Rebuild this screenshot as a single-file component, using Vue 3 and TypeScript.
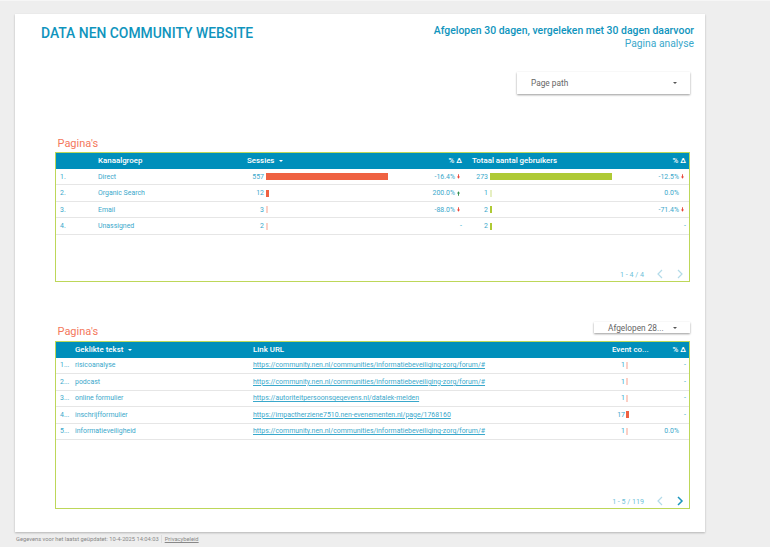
<script setup lang="ts">
interface Delta {
  text: string;
  dir?: 'up' | 'down';
  spacer?: boolean;
}

interface Metric {
  value: number;
  width: number;
  faint?: boolean;
}

interface ChannelRow {
  name: string;
  sessions: Metric;
  sessionsDelta: Delta;
  users: Metric;
  usersDelta: Delta;
}

interface ClickRow {
  label: string;
  url: string;
  events: Metric;
  delta: Delta;
}

const channels: ChannelRow[] = [
  {
    name: 'Direct',
    sessions: { value: 557, width: 122 },
    sessionsDelta: { text: '-16.4%', dir: 'down' },
    users: { value: 273, width: 122 },
    usersDelta: { text: '-12.5%', dir: 'down' },
  },
  {
    name: 'Organic Search',
    sessions: { value: 12, width: 3 },
    sessionsDelta: { text: '200.0%', dir: 'up' },
    users: { value: 1, width: 1.5, faint: true },
    usersDelta: { text: '0.0%', spacer: true },
  },
  {
    name: 'Email',
    sessions: { value: 3, width: 1.5, faint: true },
    sessionsDelta: { text: '-88.0%', dir: 'down' },
    users: { value: 2, width: 1.5 },
    usersDelta: { text: '-71.4%', dir: 'down' },
  },
  {
    name: 'Unassigned',
    sessions: { value: 2, width: 1.5, faint: true },
    sessionsDelta: { text: '-' },
    users: { value: 2, width: 1.5 },
    usersDelta: { text: '-' },
  },
];

const forumUrl = 'https://community.nen.nl/communities/informatiebeveiliging-zorg/forum/#';

const clicks: ClickRow[] = [
  { label: 'risicoanalyse', url: forumUrl, events: { value: 1, width: 1.5, faint: true }, delta: { text: '-' } },
  { label: 'podcast', url: forumUrl, events: { value: 1, width: 1.5, faint: true }, delta: { text: '-' } },
  { label: 'online formulier', url: 'https://autoriteitpersoonsgegevens.nl/datalek-melden', events: { value: 1, width: 1.5, faint: true }, delta: { text: '-' } },
  { label: 'inschrijfformulier', url: 'https://impactherziene7510.nen-evenementen.nl/page/1768160', events: { value: 17, width: 3 }, delta: { text: '-' } },
  { label: 'informatieveiligheid', url: forumUrl, events: { value: 1, width: 1.5, faint: true }, delta: { text: '0.0%', spacer: true } },
];
</script>

<template>
  <div class="page">
    <main class="report">
      <header class="report-head">
        <h1>DATA NEN COMMUNITY WEBSITE</h1>
        <div class="period">
          <div class="period-main">Afgelopen 30 dagen, vergeleken met 30 dagen daarvoor</div>
          <div class="period-sub">Pagina analyse</div>
        </div>
      </header>

      <div class="filter-row">
        <div class="filter filter-large">
          <span>Page path</span>
          <i class="caret" />
        </div>
      </div>

      <section class="block block-channels">
        <div class="block-head">
          <h2>Pagina's</h2>
        </div>
        <div class="table table-channels">
          <div class="row row-head">
            <span />
            <span>Kanaalgroep</span>
            <span>Sessies <i class="caret caret-white" /></span>
            <span class="num">% Δ</span>
            <span>Totaal aantal gebruikers</span>
            <span class="num">% Δ</span>
          </div>
          <div v-for="(row, i) in channels" :key="row.name" class="row">
            <span>{{ i + 1 }}.</span>
            <span>{{ row.name }}</span>
            <span class="metric metric-sessions">
              <b>{{ row.sessions.value }}</b>
              <i class="bar bar-red" :class="{ faint: row.sessions.faint }" :style="{ width: row.sessions.width + 'px' }" />
            </span>
            <span class="num">
              {{ row.sessionsDelta.text }}
              <svg v-if="row.sessionsDelta.dir" class="trend" :class="row.sessionsDelta.dir" viewBox="0 0 4 6"><path :d="row.sessionsDelta.dir === 'up' ? 'M1.4 6h1.2V3H4L2 0 0 3h1.4z' : 'M1.4 0h1.2v3H4L2 6 0 3h1.4z'" /></svg>
            </span>
            <span class="metric metric-users">
              <b>{{ row.users.value }}</b>
              <i class="bar bar-green" :class="{ faint: row.users.faint }" :style="{ width: row.users.width + 'px' }" />
            </span>
            <span class="num">
              {{ row.usersDelta.text }}
              <svg v-if="row.usersDelta.dir" class="trend" :class="row.usersDelta.dir" viewBox="0 0 4 6"><path d="M1.4 0h1.2v3H4L2 6 0 3h1.4z" /></svg>
              <i v-if="row.usersDelta.spacer" class="trend-gap" />
            </span>
          </div>
          <div class="pager">
            <span>1 - 4 / 4</span>
            <svg class="chev" viewBox="0 0 8 10"><path d="M6 1 2 5l4 4" /></svg>
            <svg class="chev" viewBox="0 0 8 10"><path d="m2 1 4 4-4 4" /></svg>
          </div>
        </div>
      </section>

      <section class="block block-clicks">
        <div class="block-head">
          <h2>Pagina's</h2>
          <div class="filter filter-small">
            <span>Afgelopen 28...</span>
            <i class="caret" />
          </div>
        </div>
        <div class="table table-clicks">
          <div class="row row-head">
            <span />
            <span>Geklikte tekst <i class="caret caret-white" /></span>
            <span>Link URL</span>
            <span>Event co...</span>
            <span class="num">% Δ</span>
          </div>
          <div v-for="(row, i) in clicks" :key="row.label" class="row">
            <span>{{ i + 1 }}...</span>
            <span>{{ row.label }}</span>
            <a class="link">{{ row.url }}</a>
            <span class="metric metric-events">
              <b>{{ row.events.value }}</b>
              <i class="bar bar-red" :class="{ faint: row.events.faint }" :style="{ width: row.events.width + 'px' }" />
            </span>
            <span class="num">
              {{ row.delta.text }}
              <i v-if="row.delta.spacer" class="trend-gap" />
            </span>
          </div>
          <div class="pager">
            <span>1 - 5 / 119</span>
            <svg class="chev" viewBox="0 0 8 10"><path d="M6 1 2 5l4 4" /></svg>
            <svg class="chev active" viewBox="0 0 8 10"><path d="m2 1 4 4-4 4" /></svg>
          </div>
        </div>
      </section>
    </main>

    <footer class="page-foot">
      <span>Gegevens voor het laatst geüpdatet: 10-4-2025 14:04:03</span>
      <a>Privacybeleid</a>
    </footer>
  </div>
</template>

<style>
html, body {
  margin: 0;
  background: #eeeeee;
}
</style>

<style scoped>
.page {
  height: 547px;
  box-sizing: border-box;
  padding: 13px 65px 0 15px;
  border-top: 1px solid #f6f6f6;
  overflow: hidden;
  font-family: Roboto, "Liberation Sans", sans-serif;
  color: #3aa8cb;
}

.report {
  height: 518px;
  box-sizing: border-box;
  padding: 0 11px 0 26px;
  background: #fff;
  box-shadow: 0 1px 2px rgba(0, 0, 0, 0.25);
  display: flex;
  flex-direction: column;
}

.report-head {
  display: flex;
  justify-content: space-between;
  align-items: flex-start;
  padding-top: 10px;
  height: 48px;
  box-sizing: border-box;
}

h1 {
  margin: 0;
  font-size: 13.9px;
  line-height: 18px;
  font-weight: 500;
  color: #0f94bd;
}

.period {
  text-align: right;
  font-size: 10.45px;
  line-height: 13px;
  color: #0f94bd;
}

.period-main { font-weight: 500; }
.period-sub { color: #3aa8cb; font-size: 10.3px; }

.filter-row {
  display: flex;
  justify-content: flex-end;
  padding: 10px 4px 0 0;
}

.filter {
  display: flex;
  align-items: center;
  justify-content: space-between;
  box-sizing: border-box;
  background: #fff;
  box-shadow: 0 1px 2px rgba(0, 0, 0, 0.4);
  color: #666;
}

.filter-large {
  width: 173px;
  height: 22px;
  padding: 0 13px 0 14px;
  font-size: 8.3px;
}

.filter-small {
  width: 96px;
  height: 11px;
  padding: 0 13px 0 14px;
  font-size: 8.3px;
}

.caret {
  display: inline-block;
  width: 0;
  height: 0;
  border-left: 2px solid transparent;
  border-right: 2px solid transparent;
  border-top: 2px solid #555;
  vertical-align: middle;
}

.caret-white {
  border-top-color: #fff;
  margin-left: 3px;
}

.block { display: flex; flex-direction: column; }
.block-channels { margin-top: 39px; }
.block-clicks { margin-top: 40px; }

.block-head {
  display: flex;
  justify-content: space-between;
  align-items: flex-start;
  margin: 0 4px 0 14px;
  height: 19px;
}

h2 {
  margin: 0;
  padding-left: 2.5px;
  font-size: 11px;
  line-height: 13px;
  font-weight: 400;
  color: #f4775c;
}

.block-channels h2 { padding-top: 4px; }
.block-clicks h2 { padding-top: 3px; }

.table {
  margin: 0 4px 0 14px;
  box-sizing: border-box;
  border: 1px solid #bdd759;
  display: flex;
  flex-direction: column;
  font-size: 6.95px;
}

.table-channels { height: 130px; }
.table-clicks { height: 168px; }

.row {
  display: grid;
  align-items: center;
  height: 16.5px;
  box-sizing: border-box;
  border-bottom: 1px solid #e6e6e6;
  white-space: nowrap;
}

.table-channels .row { grid-template-columns: 42px 149px 143px 82px 143px 74px; padding-top: 1px; }
.table-clicks .row { grid-template-columns: 19px 178px 359px 42px 35px; }

.row > span:first-child { padding-left: 4px; }

.table .row-head {
  height: 15.5px;
  padding-top: 0;
  border-bottom: 0;
  background: #008fbb;
  color: #fff;
  font-weight: 500;
  font-size: 7.9px;
}

.num {
  display: flex;
  justify-content: flex-end;
  align-items: center;
  gap: 2px;
}

.table-channels .row > .num:nth-child(4) { padding-right: 10px; }
.table-channels .row > .num:nth-child(6),
.table-clicks .row > .num { padding-right: 3px; }

.trend { width: 3px; height: 5px; margin-right: 2px; fill: #e94235; }
.trend.up { fill: #2e8b4a; }
.trend-gap { width: 5px; display: block; }

.metric {
  display: flex;
  align-items: center;
  gap: 2px;
}

.metric b {
  font-weight: 400;
  text-align: right;
}

.metric-sessions b { width: 17px; }
.metric-users b { width: 16px; }
.metric-events { gap: 1px; }
.metric-events b { width: 13px; }

.bar { display: block; height: 7px; }
.bar-red { background: #ef6242; }
.bar-green { background: #afca35; }
.bar-red.faint { background: #fbd0c6; }
.bar-green.faint { background: #e6efc2; }

.link {
  text-decoration: underline;
}

.pager {
  margin-top: auto;
  display: flex;
  justify-content: flex-end;
  align-items: center;
  gap: 12px;
  height: 14px;
  padding-right: 5px;
  font-size: 7.1px;
  color: #6dbfd9;
}

.chev {
  width: 8px;
  height: 10px;
  fill: none;
  stroke: #b3dbe9;
  stroke-width: 1.2;
}

.chev.active { stroke: #1b95bd; stroke-width: 1.5; }

.page-foot {
  display: flex;
  gap: 2px;
  padding: 3px 0 0 1px;
  font-size: 5.75px;
  line-height: 8px;
  color: #888;
}

.page-foot a {
  padding-left: 3px;
  border-left: 1px solid #ddd;
  text-decoration: underline;
}
</style>
